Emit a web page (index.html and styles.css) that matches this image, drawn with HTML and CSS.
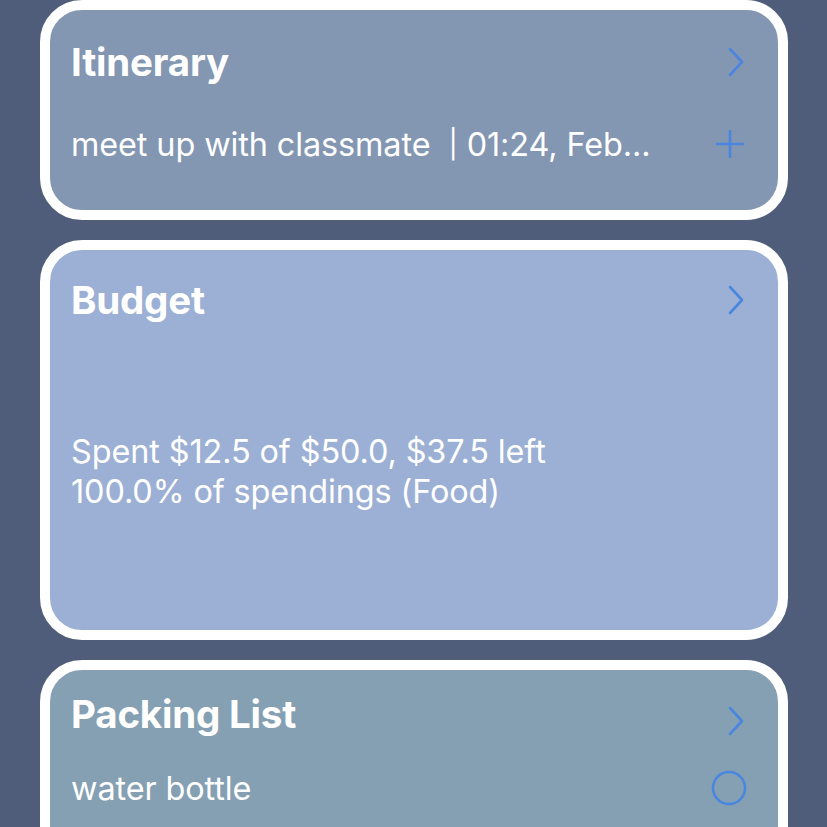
FILE: index.html
```html
<!DOCTYPE html>
<html>
<head>
<meta charset="utf-8">
<link rel="stylesheet" href="styles.css">
</head>
<body>
<div class="list">
  <section class="card card-itinerary">
    <div class="row head">
      <h2 class="title">Itinerary</h2>
      <svg class="chev" width="18" height="30" viewBox="0 0 18 30"><path d="M3 2 L15 15 L3 28" fill="none" stroke="#4a86e0" stroke-width="2.6" stroke-linecap="round" stroke-linejoin="round"/></svg>
    </div>
    <div class="row item">
      <span class="text">meet up with classmate&nbsp; <span class="pipe">|</span> 01:24, Feb...</span>
      <svg class="plus" width="28" height="28" viewBox="0 0 28 28"><path d="M14 1 V27 M1 14 H27" fill="none" stroke="#4a86e0" stroke-width="2.6" stroke-linecap="round"/></svg>
    </div>
  </section>
  <section class="card card-budget">
    <div class="row head">
      <h2 class="title">Budget</h2>
      <svg class="chev" width="18" height="30" viewBox="0 0 18 30"><path d="M3 2 L15 15 L3 28" fill="none" stroke="#4a86e0" stroke-width="2.6" stroke-linecap="round" stroke-linejoin="round"/></svg>
    </div>
    <div class="summary">
      <div>Spent $12.5 of $50.0, $37.5 left</div>
      <div>100.0% of spendings (Food)</div>
    </div>
  </section>
  <section class="card card-packing">
    <div class="row head">
      <h2 class="title">Packing List</h2>
      <svg class="chev chev-low" width="18" height="30" viewBox="0 0 18 30"><path d="M3 2 L15 15 L3 28" fill="none" stroke="#4a86e0" stroke-width="2.6" stroke-linecap="round" stroke-linejoin="round"/></svg>
    </div>
    <div class="row item">
      <span class="text">water bottle</span>
      <svg class="circle" width="36" height="36" viewBox="0 0 36 36"><circle cx="18" cy="18" r="16" fill="none" stroke="#4a86e0" stroke-width="2.6"/></svg>
    </div>
  </section>
</div>
</body>
</html>
```

FILE: styles.css
```css
html, body {
  margin: 0;
  padding: 0;
  background: #4f5d7b;
  height: 100%;
  overflow: hidden;
}
body {
  font-family: Inter, "Noto Sans", sans-serif;
  color: #ffffff;
}
.list {
  display: flex;
  flex-direction: column;
  gap: 20px;
  padding: 0 39px 0 40px;
  height: 827px;
  overflow: hidden;
}
.card {
  flex: none;
  border: 10px solid #ffffff;
  border-radius: 42px;
  padding: 0 32px 0 21px;
}
.card-itinerary {
  background: #8396b2;
  height: 200px;
}
.card-budget {
  background: #9bb0d4;
  height: 380px;
}
.card-packing {
  background: #86a0b3;
  height: 400px;
}
.row {
  display: flex;
  align-items: center;
  justify-content: space-between;
  height: 44px;
}
.title {
  margin: 0;
  font-size: 38.5px;
  font-weight: 700;
  letter-spacing: -0.2px;
}
.text {
  font-size: 32.4px;
  font-weight: 400;
  letter-spacing: -0.1px;
}
.pipe {
  font-size: 28px;
  position: relative;
  top: -2px;
}
.card-itinerary .head { margin-top: 30px; }
.card-itinerary .item { margin-top: 38px; }
.card-budget .head { margin-top: 28px; }
.card-packing .head { margin-top: 22px; }
.card-packing .item { margin-top: 30px; }
.chev { margin-right: 1px; }
.chev-low { position: relative; top: 7px; }
.plus { margin-right: 2px; }
.circle { margin-right: -1px; }
.summary {
  margin-top: 110px;
  font-size: 32.4px;
  line-height: 40px;
  letter-spacing: -0.1px;
}
```
